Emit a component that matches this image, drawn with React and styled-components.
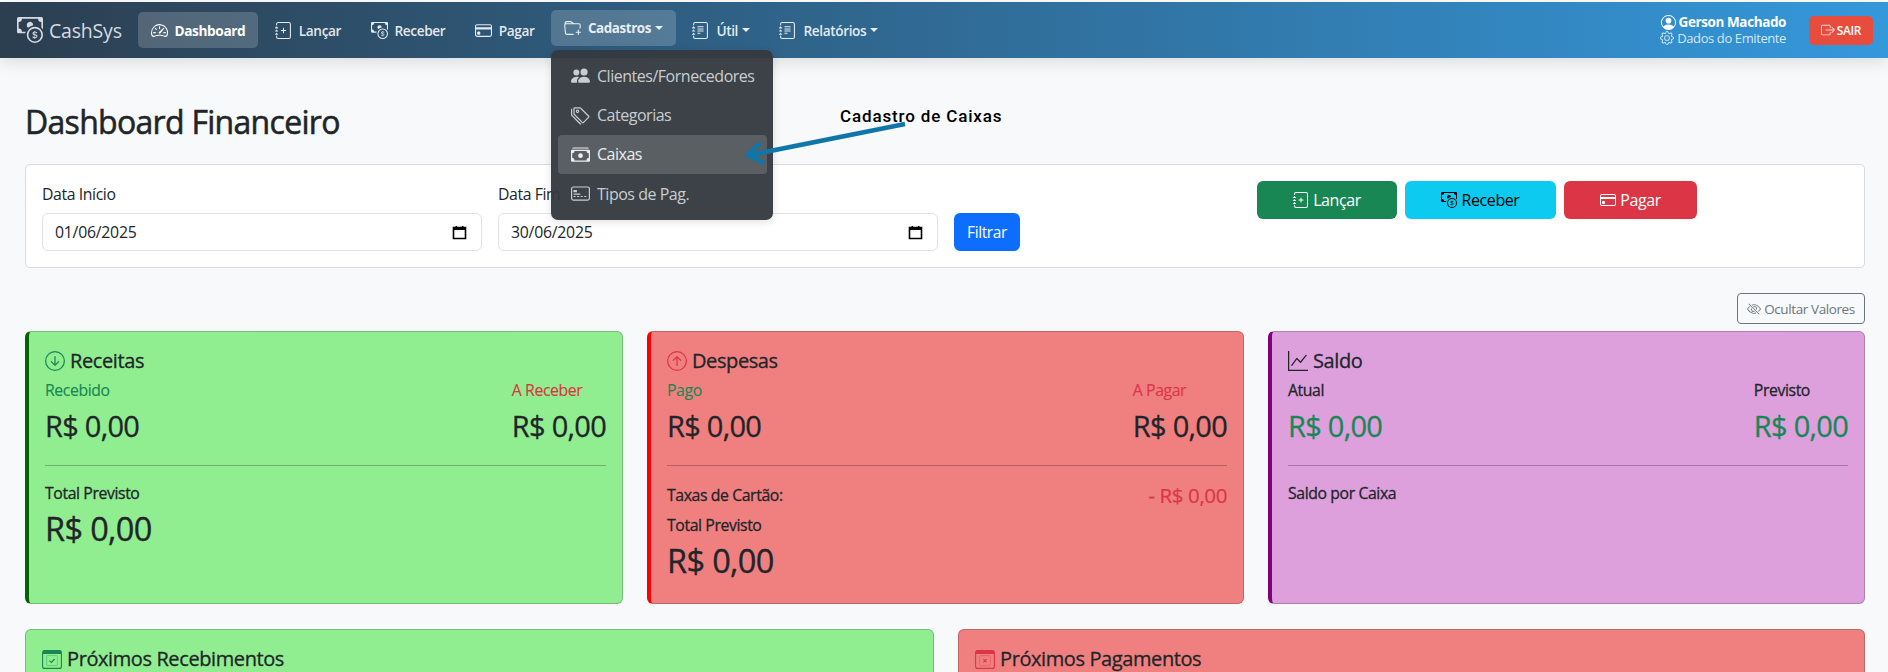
import React from 'react';
import styled, { createGlobalStyle } from 'styled-components';
import {
  BsCashCoin, BsSpeedometer2, BsJournalPlus, BsCreditCard, BsFolderPlus, BsJournalText,
  BsPersonCircle, BsGear, BsBoxArrowRight, BsPeopleFill, BsTags, BsCashStack, BsCreditCard2Front,
  BsArrowDownCircle, BsArrowUpCircle, BsGraphUp, BsEyeSlash,
} from 'react-icons/bs';

const Global = createGlobalStyle`
  html, body { margin: 0; height: 672px; overflow: hidden; background: #fff; }
  * { box-sizing: border-box; }
  body { font-family: "Open Sans", "Noto Sans", sans-serif; color: #212529; font-size: 16px; letter-spacing: -0.025em; }
`;

const Page = styled.div`
  position: relative;
  height: 672px;
  padding-top: 2px;
  overflow: hidden;
`;

const Navbar = styled.nav`
  position: relative;
  z-index: 2;
  height: 56px;
  display: flex;
  align-items: center;
  padding: 0 15px 0 17px;
  background: linear-gradient(90deg, #2c3e50, #3498db);
  box-shadow: 0 4px 16px rgba(0, 0, 0, .12);
`;

const Brand = styled.div`
  display: flex;
  align-items: center;
  gap: 6px;
  width: 121px;
  color: #d5dbe1;
  font-size: 19.5px;
  letter-spacing: -0.01em;
  svg { width: 26px; height: 26px; }
`;

const NavList = styled.div`
  display: flex;
  align-items: center;
  gap: 4.4px;
`;

const NavItem = styled.div`
  position: relative;
  display: flex;
  align-items: center;
  gap: 7px;
  height: 36px;
  padding: 0 12.5px;
  border-radius: 5px;
  font-size: ${p => (p.$open ? '13.4px' : '13.7px')};
  font-weight: ${p => (p.$active || p.$open ? 700 : 600)};
  color: ${p => (p.$active ? '#fff' : 'rgba(255,255,255,.88)')};
  background: ${p => (p.$active || p.$open ? 'rgba(255,255,255,.18)' : 'transparent')};
  transform: ${p => (p.$open ? 'translateY(-2px)' : 'none')};
  svg { width: 17px; height: 17px; flex: none; }
`;

const Caret = styled.span`
  width: 0;
  height: 0;
  margin-left: -3px;
  border-left: 4px solid transparent;
  border-right: 4px solid transparent;
  border-top: 4px solid currentColor;
`;

const UserBox = styled.div`
  margin-left: auto;
  display: flex;
  align-items: center;
  gap: 23px;
`;

const UserInfo = styled.div`
  display: flex;
  flex-direction: column;
  align-items: flex-end;
  line-height: 16px;
`;

const UserName = styled.div`
  display: flex;
  align-items: center;
  gap: 3px;
  color: #fff;
  font-size: 13.5px;
  font-weight: 700;
  svg { width: 15px; height: 15px; }
`;

const Emitente = styled.div`
  display: flex;
  align-items: center;
  gap: 3px;
  color: rgba(255,255,255,.8);
  font-size: 13px;
  svg { width: 14px; height: 14px; }
`;

const Sair = styled.div`
  display: flex;
  align-items: center;
  justify-content: center;
  gap: 2px;
  width: 64px;
  height: 29px;
  border-radius: 5px;
  background: #e74c3c;
  color: #fff;
  font-size: 12px;
  font-weight: 600;
  svg { width: 14px; height: 14px; opacity: .8; }
`;

const Menu = styled.div`
  position: absolute;
  left: 551px;
  top: 50px;
  z-index: 3;
  width: 222px;
  height: 170px;
  padding: 6px 6px 6px 7px;
  border-radius: 7px;
  background: rgba(52, 58, 64, .96);
  box-shadow: 0 2px 8px rgba(0,0,0,.12);
  display: flex;
  flex-direction: column;
`;

const MenuItem = styled.div`
  display: flex;
  align-items: center;
  gap: 7px;
  height: 39.4px;
  padding: 0 13px;
  border-radius: 4px;
  color: ${p => (p.$active ? '#eceef0' : '#c9cdd1')};
  background: ${p => (p.$active ? '#5a5f63' : 'transparent')};
  font-size: 16px;
  letter-spacing: -0.03em;
  white-space: nowrap;
  svg { width: 19px; height: 19px; flex: none; }
`;

const Annotation = styled.div`
  position: absolute;
  left: 840px;
  top: 106px;
  z-index: 4;
  color: #000;
  font-family: Roboto, sans-serif;
  font-size: 17px;
  font-weight: 500;
  letter-spacing: .05em;
`;

const ArrowArt = styled.svg`
  position: absolute;
  left: 730px;
  top: 110px;
  z-index: 4;
`;

const Main = styled.main`
  height: 614px;
  padding: 0 23px 0 25px;
  background: #f8f9fa;
`;

const Title = styled.h1`
  margin: 0;
  padding-top: 44px;
  height: 106px;
  font-size: 32px;
  line-height: 40px;
  font-weight: 400;
  letter-spacing: -0.022em;
  -webkit-text-stroke: .55px currentColor;
`;

const FilterCard = styled.section`
  display: flex;
  height: 104px;
  padding: 16px;
  background: #fff;
  border: 1px solid #d9dbdd;
  border-radius: 5px;
`;

const FilterForm = styled.div`
  display: flex;
  align-items: flex-end;
  gap: 16px;
  height: 70px;
`;

const Field = styled.div`
  display: flex;
  flex-direction: column;
  width: 440px;
`;

const FieldLabel = styled.label`
  height: 32px;
  padding-top: 3px;
  line-height: 20px;
  font-size: 15.8px;
`;

const DateInput = styled.div`
  display: flex;
  align-items: center;
  justify-content: space-between;
  height: 38px;
  padding: 0 14px 0 12px;
  background: #fff;
  border: 1px solid #dee2e6;
  border-radius: 6px;
  font-size: 15.8px;
  letter-spacing: -0.015em;
`;

const Filtrar = styled.div`
  display: flex;
  align-items: center;
  justify-content: center;
  width: 66px;
  height: 38px;
  background: #0d6efd;
  color: #fff;
  border-radius: 6px;
  font-size: 15.5px;
`;

const Actions = styled.div`
  display: flex;
  gap: 8px;
  margin-left: 237px;
`;

const ActionButton = styled.div`
  display: flex;
  align-items: center;
  justify-content: center;
  gap: 4px;
  width: ${p => p.$w}px;
  height: 38px;
  border-radius: 6px;
  background: ${p => p.$bg};
  color: ${p => p.$fg};
  font-size: 16px;
  svg { width: 16px; height: 16px; }
`;

const HideRow = styled.div`
  display: flex;
  justify-content: flex-end;
  padding-top: 25px;
  height: 63px;
`;

const HideButton = styled.div`
  display: flex;
  align-items: center;
  justify-content: center;
  gap: 3px;
  width: 128px;
  height: 31px;
  border: 1px solid #6c757d;
  border-radius: 4px;
  color: #6c757d;
  font-size: 13.5px;
  svg { width: 14px; height: 14px; }
`;

const Grid3 = styled.div`
  display: grid;
  grid-template-columns: 598px 597px 1fr;
  gap: 24px;
`;

const Grid2 = styled.div`
  display: grid;
  grid-template-columns: 909px 1fr;
  gap: 24px;
  margin-top: 25px;
`;

const Card = styled.article`
  height: 273px;
  padding: 17px 16px;
  background: ${p => p.$bg};
  border: 1px solid rgba(0,0,0,.2);
  border-left: 4px solid ${p => p.$accent};
  border-radius: 6px;
`;

const WideCard = styled.article`
  height: 160px;
  padding: 17px 16px;
  background: ${p => p.$bg};
  border: 1px solid rgba(0,0,0,.2);
  border-radius: 6px;
`;

const CardTitle = styled.h5`
  display: flex;
  align-items: center;
  gap: 5px;
  height: 24px;
  margin: 0 0 7px;
  font-size: 20px;
  font-weight: 400;
  line-height: 24px;
  span { -webkit-text-stroke: .3px currentColor; }
  svg { width: 20px; height: 20px; color: ${p => p.$iconColor || 'inherit'}; flex: none; }
`;

const Split = styled.div`
  display: flex;
  justify-content: space-between;
`;

const Col = styled.div`
  display: flex;
  flex-direction: column;
`;

const SmallLabel = styled.div`
  height: 20px;
  line-height: 20px;
  font-size: 15.8px;
  color: ${p => p.$color || '#212529'};
  -webkit-text-stroke: ${p => (p.$dark ? '.3px' : '.15px')} currentColor;
`;

const Amount = styled.div`
  margin-top: 6px;
  height: 40px;
  line-height: 40px;
  font-size: 29px;
  letter-spacing: -0.025em;
  color: ${p => p.$color || '#212529'};
  -webkit-text-stroke: .3px currentColor;
`;

const Rule = styled.hr`
  margin: 19px 0 17px;
  border: 0;
  border-top: 1px solid rgba(0,0,0,.25);
`;

const BigAmount = styled.div`
  margin-top: 4px;
  height: 44px;
  line-height: 44px;
  font-size: 32.5px;
  letter-spacing: -0.02em;
  -webkit-text-stroke: .35px currentColor;
`;

const FeeRow = styled.div`
  display: flex;
  justify-content: space-between;
  align-items: center;
  height: 24px;
  margin-bottom: 8px;
`;

const FeeValue = styled.div`
  font-size: 20.5px;
  color: #dc3545;
  -webkit-text-stroke: .2px currentColor;
`;

const CalendarGlyph = () => (
  <svg width="15" height="15" viewBox="0 0 15 15" aria-hidden="true">
    <path d="M1.5 2.5h12v11h-12z" fill="none" stroke="#000" strokeWidth="1.6" />
    <path d="M1 2h13v3H1zM3.5 1h1.6v2H3.5zM9.9 1h1.6v2H9.9z" fill="#000" />
  </svg>
);

const DueCalendar = ({ kind }) => (
  <svg viewBox="0 0 20 20" fill="none" stroke="currentColor" aria-hidden="true">
    <rect x=".6" y="1.6" width="18.8" height="17.8" rx="2" strokeWidth="1.1" />
    <path d="M1 2.6a1.4 1.4 0 0 1 1.4-1.4h15.2A1.4 1.4 0 0 1 19 2.6V5H1z" fill="currentColor" stroke="none" />
    <rect x="4.6" y="6.6" width="10.8" height="10" rx=".8" strokeWidth=".35" />
    {kind === 'check'
      ? <path d="M7.4 11.6l2 1.9 3.3-3.5" strokeWidth="1.2" />
      : <path d="M8.4 10.2l3.2 3.2M11.6 10.2l-3.2 3.2" strokeWidth="1.2" />}
  </svg>
);

export default function App() {
  return (
    <Page>
      <Global />
      <Navbar>
        <Brand><BsCashCoin />CashSys</Brand>
        <NavList>
          <NavItem $active><BsSpeedometer2 />Dashboard</NavItem>
          <NavItem><BsJournalPlus />Lançar</NavItem>
          <NavItem><BsCashCoin />Receber</NavItem>
          <NavItem><BsCreditCard />Pagar</NavItem>
          <NavItem $open><BsFolderPlus />Cadastros<Caret /></NavItem>
          <NavItem><BsJournalText />Útil<Caret /></NavItem>
          <NavItem><BsJournalText />Relatórios<Caret /></NavItem>
        </NavList>
        <UserBox>
          <UserInfo>
            <UserName><BsPersonCircle />Gerson Machado</UserName>
            <Emitente><BsGear />Dados do Emitente</Emitente>
          </UserInfo>
          <Sair><BsBoxArrowRight />SAIR</Sair>
        </UserBox>
      </Navbar>

      <Menu>
        <MenuItem><BsPeopleFill />Clientes/Fornecedores</MenuItem>
        <MenuItem><BsTags />Categorias</MenuItem>
        <MenuItem $active><BsCashStack />Caixas</MenuItem>
        <MenuItem><BsCreditCard2Front />Tipos de Pag.</MenuItem>
      </Menu>

      <Annotation>Cadastro de Caixas</Annotation>
      <ArrowArt width="190" height="70" viewBox="0 0 190 70">
        <path d="M175 14L20 45" stroke="#0e76a8" strokeWidth="4.5" fill="none" />
        <path d="M30 33L18 45L34 53" stroke="#0e76a8" strokeWidth="4.5" fill="none" />
      </ArrowArt>

      <Main>
        <Title>Dashboard Financeiro</Title>

        <FilterCard>
          <FilterForm>
            <Field>
              <FieldLabel>Data Início</FieldLabel>
              <DateInput>01/06/2025<CalendarGlyph /></DateInput>
            </Field>
            <Field>
              <FieldLabel>Data Fim</FieldLabel>
              <DateInput>30/06/2025<CalendarGlyph /></DateInput>
            </Field>
            <Filtrar>Filtrar</Filtrar>
          </FilterForm>
          <Actions>
            <ActionButton $w={140} $bg="#198754" $fg="#fff"><BsJournalPlus />Lançar</ActionButton>
            <ActionButton $w={151} $bg="#0dcaf0" $fg="#000"><BsCashCoin />Receber</ActionButton>
            <ActionButton $w={133} $bg="#dc3545" $fg="#fff"><BsCreditCard />Pagar</ActionButton>
          </Actions>
        </FilterCard>

        <HideRow>
          <HideButton><BsEyeSlash />Ocultar Valores</HideButton>
        </HideRow>

        <Grid3>
          <Card $bg="#90ee90" $accent="#006400">
            <CardTitle $iconColor="#198754"><BsArrowDownCircle /><span>Receitas</span></CardTitle>
            <Split>
              <Col>
                <SmallLabel $color="#198754">Recebido</SmallLabel>
                <Amount>R$ 0,00</Amount>
              </Col>
              <Col>
                <SmallLabel $color="#dc3545">A Receber</SmallLabel>
                <Amount>R$ 0,00</Amount>
              </Col>
            </Split>
            <Rule />
            <SmallLabel $dark>Total Previsto</SmallLabel>
            <BigAmount>R$ 0,00</BigAmount>
          </Card>

          <Card $bg="#f08080" $accent="#ff0000">
            <CardTitle $iconColor="#dc3545"><BsArrowUpCircle /><span>Despesas</span></CardTitle>
            <Split>
              <Col>
                <SmallLabel $color="#198754">Pago</SmallLabel>
                <Amount>R$ 0,00</Amount>
              </Col>
              <Col>
                <SmallLabel $color="#dc3545">A Pagar</SmallLabel>
                <Amount>R$ 0,00</Amount>
              </Col>
            </Split>
            <Rule />
            <FeeRow>
              <SmallLabel $dark>Taxas de Cartão:</SmallLabel>
              <FeeValue>- R$ 0,00</FeeValue>
            </FeeRow>
            <SmallLabel $dark>Total Previsto</SmallLabel>
            <BigAmount>R$ 0,00</BigAmount>
          </Card>

          <Card $bg="#dda0dd" $accent="#800080">
            <CardTitle><BsGraphUp /><span>Saldo</span></CardTitle>
            <Split>
              <Col>
                <SmallLabel $dark>Atual</SmallLabel>
                <Amount $color="#198754">R$ 0,00</Amount>
              </Col>
              <Col>
                <SmallLabel $dark>Previsto</SmallLabel>
                <Amount $color="#198754">R$ 0,00</Amount>
              </Col>
            </Split>
            <Rule />
            <SmallLabel $dark>Saldo por Caixa</SmallLabel>
          </Card>
        </Grid3>

        <Grid2>
          <WideCard $bg="#90ee90">
            <CardTitle $iconColor="#198754"><DueCalendar kind="check" /><span>Próximos Recebimentos</span></CardTitle>
          </WideCard>
          <WideCard $bg="#f08080">
            <CardTitle $iconColor="#dc3545"><DueCalendar kind="x" /><span>Próximos Pagamentos</span></CardTitle>
          </WideCard>
        </Grid2>
      </Main>
    </Page>
  );
}
